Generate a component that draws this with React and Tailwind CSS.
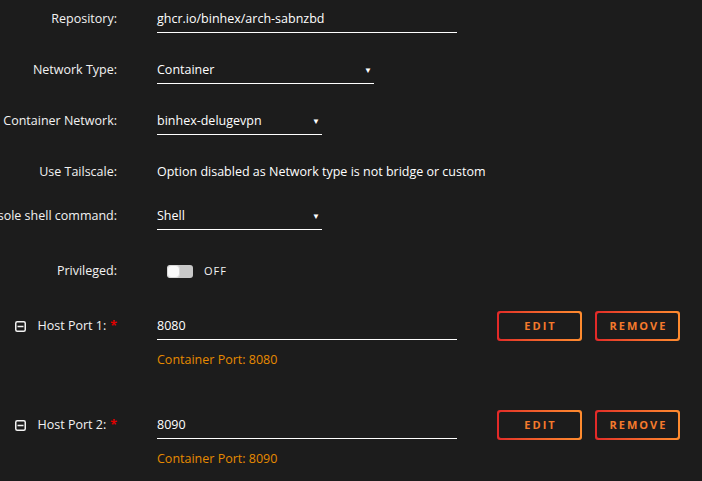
const labelCls = "w-[117px] shrink-0 flex justify-end whitespace-nowrap text-[#f2f2f2]";

const Field = ({ label, children, className = "" }) => (
  <div className={`flex gap-[40px] leading-[20px] ${className}`}>
    <div className={labelCls}>{label}</div>
    {children}
  </div>
);

const TextInput = ({ value, width }) => (
  <div className={`${width} pb-[3px] border-b border-white text-white`}>{value}</div>
);

const Select = ({ value, width }) => (
  <div className={`${width} pb-[3px] border-b border-white text-white flex justify-between items-center pr-[2px]`}>
    <span>{value}</span>
    <span className="text-[8px] leading-none">▼</span>
  </div>
);

const GradientButton = ({ children }) => (
  <div className="w-[85px] h-[30px] rounded-[3px] p-[2px] bg-gradient-to-r from-[#e22828] to-[#ff8c2f]">
    <div className="w-full h-full rounded-[2px] bg-[#1c1c1c] flex items-center justify-center text-[11px] font-bold tracking-[2px] text-[#f47a2c] pl-[2px]">
      {children}
    </div>
  </div>
);

const PortRow = ({ n, value, className = "" }) => (
  <div className={className}>
    <div className="flex leading-[20px]">
      <div className={`${labelCls} pt-[3px] items-center h-[26px]`}>
        <svg width="11" height="11" viewBox="0 0 11 11" className="mr-[11px] mt-[1px]">
          <rect x="0.75" y="0.75" width="9.5" height="9.5" rx="1.5" fill="none" stroke="#f2f2f2" strokeWidth="1.5" />
          <line x1="2.5" y1="5.5" x2="8.5" y2="5.5" stroke="#f2f2f2" strokeWidth="1.5" />
        </svg>
        <span>Host Port {n}:</span>
        <span className="text-[#e00000] ml-[4px] font-bold">*</span>
      </div>
      <div className="ml-[40px] w-[300px] pt-[5px] pb-[3px] border-b border-white text-white h-[29px]">{value}</div>
      <div className="ml-[40px] flex gap-[13px]">
        <GradientButton>EDIT</GradientButton>
        <GradientButton>REMOVE</GradientButton>
      </div>
    </div>
    <div className="ml-[157px] mt-[9px] leading-[20px] text-[#e68a00]">Container Port: {value}</div>
  </div>
);

export default function App() {
  return (
    <div
      className="w-full h-[481px] overflow-hidden bg-[#1c1c1c] text-[12.5px] pt-[9px]"
      style={{ fontFamily: '"Open Sans", "Noto Sans", sans-serif' }}
    >
      <Field label="Repository:">
        <TextInput value="ghcr.io/binhex/arch-sabnzbd" width="w-[300px]" />
      </Field>
      <Field label="Network Type:" className="mt-[27px]">
        <Select value="Container" width="w-[217px]" />
      </Field>
      <Field label="Container Network:" className="mt-[27px]">
        <Select value="binhex-delugevpn" width="w-[165px]" />
      </Field>
      <Field label="Use Tailscale:" className="mt-[27px]">
        <div className="text-white">Option disabled as Network type is not bridge or custom</div>
      </Field>
      <Field label="Console shell command:" className="mt-[24px]">
        <Select value="Shell" width="w-[165px]" />
      </Field>
      <Field label="Privileged:" className="mt-[31px]">
        <div className="flex items-center ml-[10px]">
          <div className="w-[26px] h-[13px] rounded-[3px] bg-[#c8c8c8] flex items-center">
            <div className="w-[13px] h-[13px] rounded-[4px] bg-[#fafafa] border border-[#d8d8d8]" />
          </div>
          <span className="ml-[11px] text-[11px] tracking-[1px] text-[#f2f2f2]">OFF</span>
        </div>
      </Field>
      <PortRow n={1} value="8080" className="mt-[30px]" />
      <PortRow n={2} value="8090" className="mt-[40px]" />
    </div>
  );
}
